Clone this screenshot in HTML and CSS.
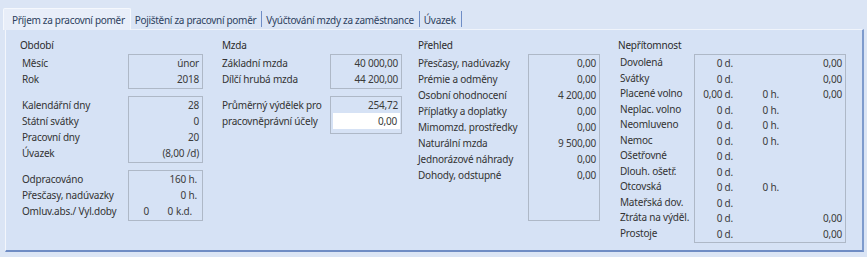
FILE: index.html
```html
<!DOCTYPE html>
<html lang="cs">

<head>
    <meta charset="UTF-8">
    <title>Příjem za pracovní poměr</title>
    <link rel="stylesheet" href="styles.css">
</head>

<body>
    <div class="tabs">
        <div class="tab active">Příjem za pracovní poměr</div>
        <div class="tab">Pojištění za pracovní poměr</div>
        <div class="tab">Vyúčtování mzdy za zaměstnance</div>
        <div class="tab">Úvazek</div>
    </div>

    <div class="panel">
        <section class="col obdobi">
            <h2>Období</h2>
            <div class="group">
                <div class="labels">
                    <span>Měsíc</span>
                    <span>Rok</span>
                </div>
                <div class="box">
                    <span>únor</span>
                    <span>2018</span>
                </div>
            </div>
            <div class="group">
                <div class="labels">
                    <span>Kalendářní dny</span>
                    <span>Státní svátky</span>
                    <span>Pracovní dny</span>
                    <span>Úvazek</span>
                </div>
                <div class="box">
                    <span>28</span>
                    <span>0</span>
                    <span>20</span>
                    <span>(8,00 /d)</span>
                </div>
            </div>
            <div class="group">
                <div class="labels">
                    <span>Odpracováno</span>
                    <span>Přesčasy, nadúvazky</span>
                    <span>Omluv.abs./ Vyl.doby</span>
                </div>
                <div class="box hours">
                    <span class="unit-row">160 h.</span>
                    <span class="unit-row">0 h.</span>
                    <div class="kd-row"><span>0</span><span>0</span><span>k.d.</span></div>
                </div>
            </div>
        </section>

        <section class="col mzda">
            <h2>Mzda</h2>
            <div class="group">
                <div class="labels">
                    <span>Základní mzda</span>
                    <span>Dílčí hrubá mzda</span>
                </div>
                <div class="box">
                    <span>40 000,00</span>
                    <span>44 200,00</span>
                </div>
            </div>
            <div class="group">
                <div class="labels">
                    <span>Průměrný výdělek pro</span>
                    <span>pracovněprávní účely</span>
                </div>
                <div class="box tall">
                    <span>254,72</span>
                    <span class="input">0,00</span>
                </div>
            </div>
        </section>

        <section class="col prehled">
            <h2>Přehled</h2>
            <div class="group">
                <div class="labels">
                    <span>Přesčasy, nadúvazky</span>
                    <span>Prémie a odměny</span>
                    <span>Osobní ohodnocení</span>
                    <span>Příplatky a doplatky</span>
                    <span>Mimomzd. prostředky</span>
                    <span>Naturální mzda</span>
                    <span>Jednorázové náhrady</span>
                    <span>Dohody, odstupné</span>
                </div>
                <div class="box long">
                    <span>0,00</span>
                    <span>0,00</span>
                    <span>4 200,00</span>
                    <span>0,00</span>
                    <span>0,00</span>
                    <span>9 500,00</span>
                    <span>0,00</span>
                    <span>0,00</span>
                </div>
            </div>
        </section>

        <section class="col nepritomnost">
            <h2>Nepřítomnost</h2>
            <div class="group">
                <div class="labels">
                    <span>Dovolená</span>
                    <span>Svátky</span>
                    <span>Placené volno</span>
                    <span>Neplac. volno</span>
                    <span>Neomluveno</span>
                    <span>Nemoc</span>
                    <span>Ošetřovné</span>
                    <span>Dlouh. ošetř.</span>
                    <span>Otcovská</span>
                    <span>Mateřská dov.</span>
                    <span>Ztráta na výděl.</span>
                    <span>Prostoje</span>
                </div>
                <div class="box absence">
                    <div class="arow"><span>0 d.</span><span></span><span>0,00</span></div>
                    <div class="arow"><span>0 d.</span><span></span><span>0,00</span></div>
                    <div class="arow"><span>0,00 d.</span><span>0 h.</span><span>0,00</span></div>
                    <div class="arow"><span>0 d.</span><span>0 h.</span><span></span></div>
                    <div class="arow"><span>0 d.</span><span>0 h.</span><span></span></div>
                    <div class="arow"><span>0 d.</span><span>0 h.</span><span></span></div>
                    <div class="arow"><span>0 d.</span><span></span><span></span></div>
                    <div class="arow"><span>0 d.</span><span></span><span></span></div>
                    <div class="arow"><span>0 d.</span><span>0 h.</span><span></span></div>
                    <div class="arow"><span>0 d.</span><span></span><span></span></div>
                    <div class="arow"><span>0 d.</span><span></span><span>0,00</span></div>
                    <div class="arow"><span>0 d.</span><span></span><span>0,00</span></div>
                </div>
            </div>
        </section>
    </div>
</body>

</html>
```

FILE: styles.css
```css
body {
    margin: 0;
    padding: 0;
    background-color: #dbe5f5;
    font-family: "Noto Sans", "Open Sans", sans-serif;
    font-size: 10px;
    letter-spacing: -0.2px;
    color: #333;
}

.tabs {
    display: flex;
    padding: 8px 0 0 3px;
    height: 21px;
}

.tab {
    padding: 0 5px 0 4px;
    line-height: 18px;
    margin-top: 3px;
    color: #2d3f5e;
    letter-spacing: -0.3px;
    border-right: 1px solid #6f8dc6;
    height: 16px;
}

.tab.active {
    margin: 0;
    height: 21px;
    line-height: 22px;
    padding: 0 5px 0 8px;
    background-color: #e8eef9;
    border: 1px solid #f5f8fd;
    border-bottom: none;
    border-radius: 2px 2px 0 0;
}

.panel {
    margin: 0 3px 0 5px;
    height: 220px;
    border-top: 1px solid #f0f4fb;
    border-left: 1px solid #f3f6fc;
    border-right: 2px solid #7e9bcd;
    border-bottom: 2px solid #6f8cc4;
    background-color: #d6e2f5;
    display: grid;
    grid-template-columns: 202px 196px 200px 1fr;
    padding-left: 14px;
}

.col h2 {
    font-size: 10px;
    font-weight: normal;
    margin: 7px 0 1px 0;
    line-height: 16px;
    color: #2b2b2b;
}

.group {
    display: flex;
    margin-bottom: 7px;
}

.labels {
    display: flex;
    flex-direction: column;
    padding-top: 1px;
}

.labels span,
.box span,
.kd-row,
.arow {
    line-height: 16px;
    height: 16px;
    white-space: nowrap;
}

.box {
    display: flex;
    flex-direction: column;
    text-align: right;
    border: 1px solid #aeb8c7;
    padding: 0 3px 1px 0;
    color: #3b3b3b;
}

.obdobi .labels {
    width: 106px;
    padding-left: 2px;
}

.obdobi .box {
    width: 70px;
}

.mzda .labels {
    width: 108px;
}

.mzda .box,
.prehled .box {
    width: 67px;
}

.box.tall {
    padding-bottom: 4px;
}

.box .input {
    background-color: #fff;
    margin: 0 -2px 0 2px;
    padding-right: 3px;
}

.prehled .labels {
    width: 110px;
}

.box.long {
    height: 164px;
}

.hours .unit-row {
    padding-right: 2px;
}

.kd-row {
    display: flex;
}

.kd-row span:nth-child(1) {
    width: 20px;
}

.kd-row span:nth-child(2) {
    width: 24px;
}

.kd-row span:nth-child(3) {
    margin-left: 3px;
}

.nepritomnost .labels {
    width: 74px;
    padding-left: 2px;
}

.nepritomnost .labels span,
.arow {
    height: 15.5px;
    line-height: 15.5px;
}

.absence {
    width: 147px;
    padding-right: 3px;
}

.arow {
    display: grid;
    grid-template-columns: 38px 46px 1fr;
    text-align: right;
}
```
